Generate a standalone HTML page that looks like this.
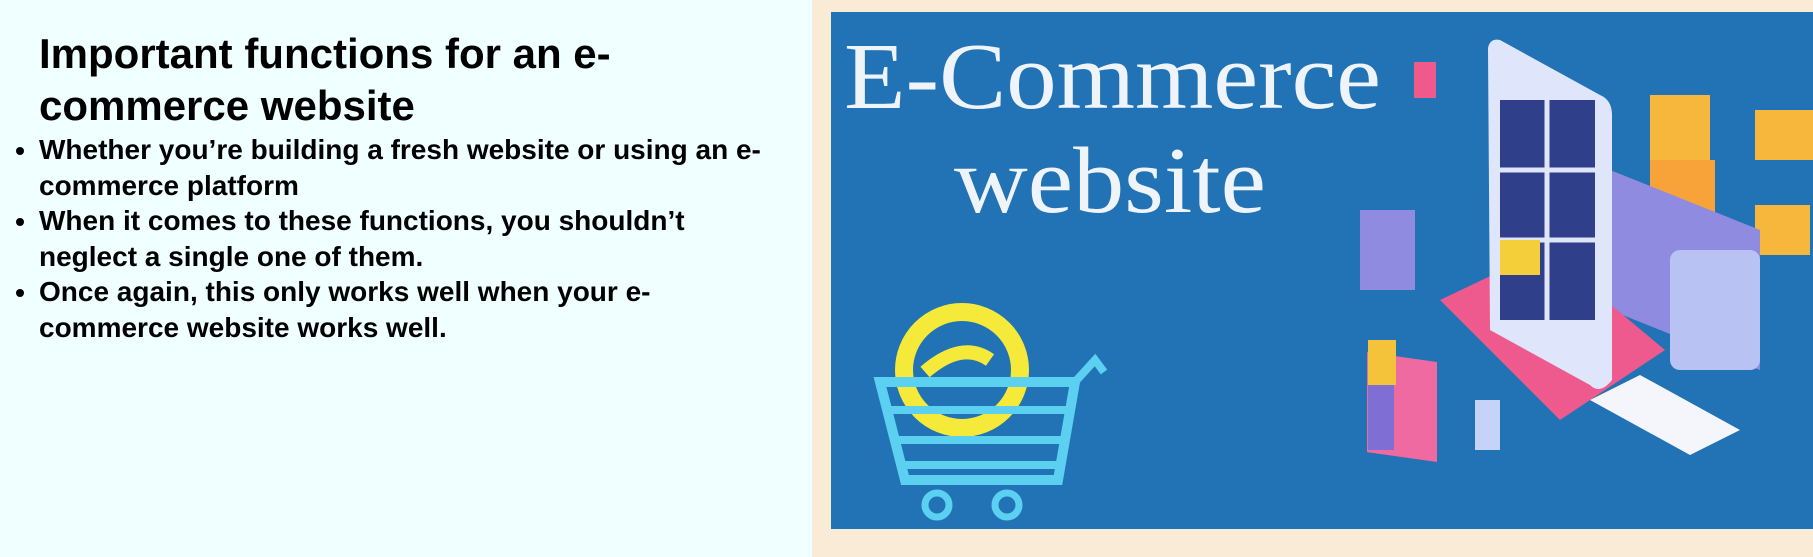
<!DOCTYPE html>
<html><head><meta charset="utf-8"><style>
html,body{margin:0;padding:0;width:1813px;height:557px;overflow:hidden}
body{position:relative;background:#faebd7;font-family:"Liberation Sans Narrow","Liberation Sans",sans-serif}
#left{position:absolute;left:0;top:0;width:812px;height:557px;background:#f0ffff}
h1{position:absolute;left:39px;top:28px;margin:0;font-size:42px;line-height:52px;font-weight:bold;white-space:nowrap;color:#000}
ul{position:absolute;left:0;top:132px;margin:0;padding:0 0 0 39px;font-size:28px;line-height:35.5px;font-weight:bold;white-space:nowrap;color:#000}
li{margin:0}
svg{position:absolute;left:0;top:0}
</style></head><body>
<div id="left">
<h1>Important functions for an e-<br>commerce website</h1>
<ul>
<li>Whether you’re building a fresh website or using an e-<br>commerce platform</li>
<li>When it comes to these functions, you shouldn’t<br>neglect a single one of them.</li>
<li>Once again, this only works well when your e-<br>commerce website works well.</li>
</ul>
</div>
<svg width="1813" height="557" viewBox="0 0 1813 557">
<rect x="831" y="12" width="982" height="517" fill="#2173b5"/>
<text x="844" y="108" font-family="Liberation Serif,serif" font-size="94" fill="#eef4fa" textLength="537" lengthAdjust="spacingAndGlyphs">E-Commerce</text>
<text x="954" y="212" font-family="Liberation Serif,serif" font-size="94" fill="#eef4fa" textLength="312" lengthAdjust="spacingAndGlyphs">website</text>
<!-- cart -->
<circle cx="962" cy="370" r="58" fill="none" stroke="#f5e93a" stroke-width="18"/>
<path d="M925 372 Q962 340 990 360" fill="none" stroke="#f5e93a" stroke-width="14"/>
<path d="M880 382 L1075 382 L1058 480 L905 480 Z" fill="none" stroke="#5cd0f0" stroke-width="10"/>
<path d="M888 410 H1070 M895 440 H1064 M900 465 H1060" stroke="#5cd0f0" stroke-width="8"/>
<path d="M1075 382 L1095 360 L1104 372" fill="none" stroke="#5cd0f0" stroke-width="8"/>
<circle cx="937" cy="505" r="12" fill="none" stroke="#5cd0f0" stroke-width="7"/>
<circle cx="1007" cy="505" r="12" fill="none" stroke="#5cd0f0" stroke-width="7"/>
<!-- pink x tag -->
<rect x="1414" y="62" width="22" height="36" fill="#ef5a8a"/>
<!-- bags -->
<rect x="1367" y="160" width="70" height="100" fill="#ef6aa0" transform="skewY(8)"/>
<rect x="1360" y="210" width="55" height="80" fill="#8f8be0"/>
<!-- boxes -->
<rect x="1650" y="95" width="60" height="70" fill="#f6b73c"/>
<rect x="1650" y="160" width="65" height="65" fill="#f8a33a"/>
<rect x="1755" y="110" width="58" height="50" fill="#f6b73c"/>
<rect x="1755" y="205" width="55" height="50" fill="#f6b73c"/>
<!-- truck -->
<path d="M1610 170 L1760 230 L1760 370 L1610 310 Z" fill="#8f8be0"/>
<rect x="1670" y="250" width="90" height="120" rx="10" fill="#b9c3f3"/>
<!-- pink base -->
<path d="M1440 300 L1545 250 L1665 350 L1560 420 Z" fill="#ee5a8e"/>
<!-- phone -->
<path d="M1488 48 Q1490 38 1500 40 L1600 95 Q1612 100 1612 115 L1612 380 Q1600 395 1590 385 L1490 330 Z" fill="#dfe6fb"/>
<rect x="1500" y="100" width="95" height="220" fill="#2f3f8a"/>
<path d="M1500 170 H1595 M1500 240 H1595 M1547 100 V320" stroke="#dfe6fb" stroke-width="5"/>
<rect x="1500" y="240" width="40" height="35" fill="#f5cf3a"/>
<!-- card -->
<path d="M1590 400 L1640 375 L1740 430 L1690 455 Z" fill="#f4f6fb"/>
<!-- people -->
<rect x="1368" y="340" width="28" height="45" fill="#f5c33a"/>
<rect x="1368" y="385" width="26" height="65" fill="#7f6fd4"/>
<rect x="1475" y="400" width="25" height="50" fill="#c5d3f8"/>
</svg>
</body></html>
